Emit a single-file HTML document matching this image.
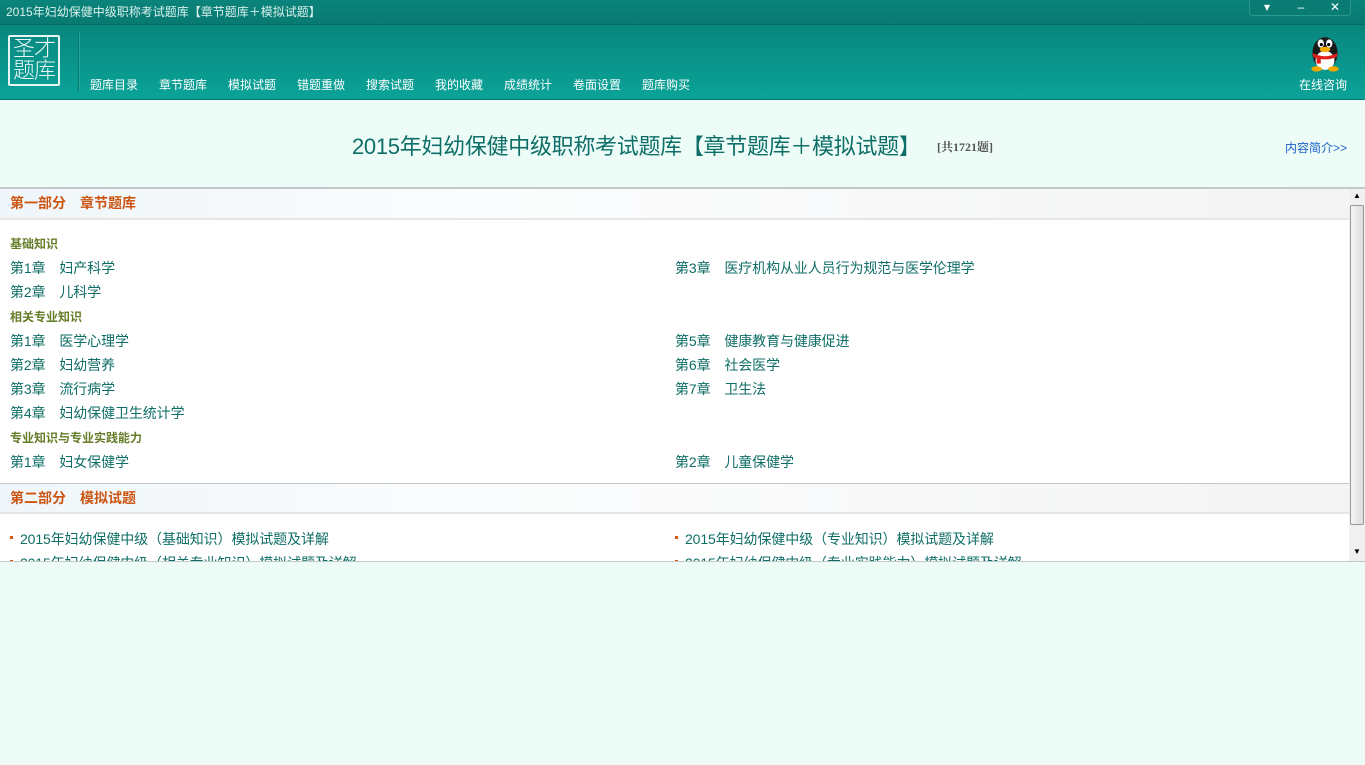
<!DOCTYPE html>
<html><head><meta charset="utf-8"><style>
*{margin:0;padding:0;box-sizing:border-box}
body{width:1365px;height:765px;overflow:hidden;background:#eefcf8;font-family:"Liberation Sans","Noto Sans CJK SC",sans-serif;position:relative}
#title{position:absolute;left:0;top:0;width:1365px;height:25px;background:linear-gradient(#0b847b,#087a72);border-bottom:1px solid #066a63;color:#d8f0ec;font-size:12px;line-height:24px;padding-left:6px}
#wb{position:absolute;right:14px;top:0;width:102px;height:16px;background:#0b7c74;border:1px solid #2a9a90;border-top:none;border-radius:0 0 4px 4px;color:#fff;font-size:12px}
#wb span{position:absolute;top:0;line-height:14px;width:34px;text-align:center}
#bar{position:absolute;left:0;top:25px;width:1365px;height:75px;background:linear-gradient(#08867e,#0aa398);border-bottom:1px solid #0a7a70}
#logo{position:absolute;left:8px;top:10px;width:52px;height:51px;border:2px solid #e8f5f3;border-radius:2px;color:#e8f5f3;font-size:22px;line-height:22px;text-align:center;padding-top:1px;font-weight:300;letter-spacing:-1px}
#sep{position:absolute;left:78px;top:8px;width:1px;height:58px;background:#0b766e;box-shadow:1px 0 0 #1eaa9f}
.nav{position:absolute;top:51px;color:#fff;font-size:12px}
#qq{position:absolute;left:1299px;top:51px;color:#fff;font-size:12px}
h1{position:absolute;left:352px;top:129px;font-size:22px;font-weight:normal;color:#0e6e68;letter-spacing:-0.3px}
#cnt{position:absolute;left:937px;top:138px;font-size:12px;color:#555;font-family:"Liberation Serif","Noto Serif CJK SC",serif;font-weight:bold}
#intro{position:absolute;left:1285px;top:139px;font-size:12px;color:#1a62c9}
#panel{position:absolute;left:0;top:187px;width:1365px;height:375px;background:#fff;border-top:2px solid #c3c9c8;border-bottom:1px solid #c3c9c8;overflow:hidden}
.sec{position:absolute;left:0;width:1349px;height:31px;background:linear-gradient(90deg,#f0f6fa 0,#fbfcfd 500px,#f4f4f4 1349px);border-bottom:2px solid #e6e6e6;color:#cc5511;font-weight:bold;font-size:14px;line-height:29px;padding-left:10px;font-family:"Liberation Sans","Noto Sans CJK SC",sans-serif}
.sub{position:absolute;left:10px;color:#667d2a;font-weight:bold;font-size:12px;font-family:"Liberation Sans","Noto Sans CJK SC",sans-serif}
.it{position:absolute;color:#0f6e66;font-size:14px;letter-spacing:-0.1px}
.dot{position:absolute;width:3px;height:3px;background:#d45a10}
#sb{position:absolute;left:1349px;top:0;width:16px;height:375px;background:#f0f0f0}
#thumb{position:absolute;left:1px;top:16px;width:14px;height:320px;background:linear-gradient(90deg,#f4f4f4,#dcdcdc);border:1px solid #999;border-radius:2px}
</style></head><body>
<div id="title">2015年妇幼保健中级职称考试题库【章节题库＋模拟试题】</div>
<div id="wb"><span style="left:0">▾</span><span style="left:34px">–</span><span style="left:68px">✕</span></div>
<div id="bar">
<div id="logo">圣才<br>题库</div>
<div id="sep"></div>
<span class="nav" style="left:90px">题库目录</span>
<span class="nav" style="left:159px">章节题库</span>
<span class="nav" style="left:228px">模拟试题</span>
<span class="nav" style="left:297px">错题重做</span>
<span class="nav" style="left:366px">搜索试题</span>
<span class="nav" style="left:435px">我的收藏</span>
<span class="nav" style="left:504px">成绩统计</span>
<span class="nav" style="left:573px">卷面设置</span>
<span class="nav" style="left:642px">题库购买</span>
<svg style="position:absolute;left:1306px;top:7px" width="38" height="40" viewBox="0 0 36 38"><ellipse cx="18" cy="20" rx="12" ry="15" fill="#1a1a1a"/><ellipse cx="18" cy="27" rx="9" ry="9" fill="#fff"/><ellipse cx="14" cy="11" rx="3" ry="4" fill="#fff"/><ellipse cx="22" cy="11" rx="3" ry="4" fill="#fff"/><circle cx="14.5" cy="12" r="1.5" fill="#000"/><circle cx="21.5" cy="12" r="1.5" fill="#000"/><ellipse cx="18" cy="16.5" rx="5" ry="2.5" fill="#f5a800"/><path d="M6 20 Q18 26 30 20 L29 24 Q18 28 7 24Z" fill="#e0201a"/><rect x="10" y="23" width="4" height="7" fill="#e0201a"/><ellipse cx="10" cy="35" rx="5" ry="2.5" fill="#f5a800"/><ellipse cx="26" cy="35" rx="5" ry="2.5" fill="#f5a800"/></svg>
<span id="qq">在线咨询</span>
</div>
<h1>2015年妇幼保健中级职称考试题库【章节题库＋模拟试题】</h1>
<span id="cnt">[共1721题]</span>
<span id="intro">内容简介&gt;&gt;</span>
<div id="panel">
<div class="sec" style="top:0">第一部分　章节题库</div>
<div class="sub" style="top:46px">基础知识</div>
<div class="it" style="left:10px;top:69px">第1章　妇产科学</div>
<div class="it" style="left:675px;top:69px">第3章　医疗机构从业人员行为规范与医学伦理学</div>
<div class="it" style="left:10px;top:93px">第2章　儿科学</div>
<div class="sub" style="top:119px">相关专业知识</div>
<div class="it" style="left:10px;top:142px">第1章　医学心理学</div>
<div class="it" style="left:675px;top:142px">第5章　健康教育与健康促进</div>
<div class="it" style="left:10px;top:166px">第2章　妇幼营养</div>
<div class="it" style="left:675px;top:166px">第6章　社会医学</div>
<div class="it" style="left:10px;top:190px">第3章　流行病学</div>
<div class="it" style="left:675px;top:190px">第7章　卫生法</div>
<div class="it" style="left:10px;top:214px">第4章　妇幼保健卫生统计学</div>
<div class="sub" style="top:240px">专业知识与专业实践能力</div>
<div class="it" style="left:10px;top:263px">第1章　妇女保健学</div>
<div class="it" style="left:675px;top:263px">第2章　儿童保健学</div>
<div class="sec" style="top:294px;border-top:1px solid #c3c9c8">第二部分　模拟试题</div>
<div class="dot" style="left:10px;top:347px"></div>
<div class="it" style="left:20px;top:340px">2015年妇幼保健中级（基础知识）模拟试题及详解</div>
<div class="dot" style="left:675px;top:347px"></div>
<div class="it" style="left:685px;top:340px">2015年妇幼保健中级（专业知识）模拟试题及详解</div>
<div class="dot" style="left:10px;top:371px"></div>
<div class="it" style="left:20px;top:364px">2015年妇幼保健中级（相关专业知识）模拟试题及详解</div>
<div class="dot" style="left:675px;top:371px"></div>
<div class="it" style="left:685px;top:364px">2015年妇幼保健中级（专业实践能力）模拟试题及详解</div>
<div id="sb"><span style="position:absolute;left:4px;top:2px;font-size:8px">▲</span><div id="thumb"></div><span style="position:absolute;left:4px;top:358px;font-size:8px">▼</span></div>
</div>
</body></html>
